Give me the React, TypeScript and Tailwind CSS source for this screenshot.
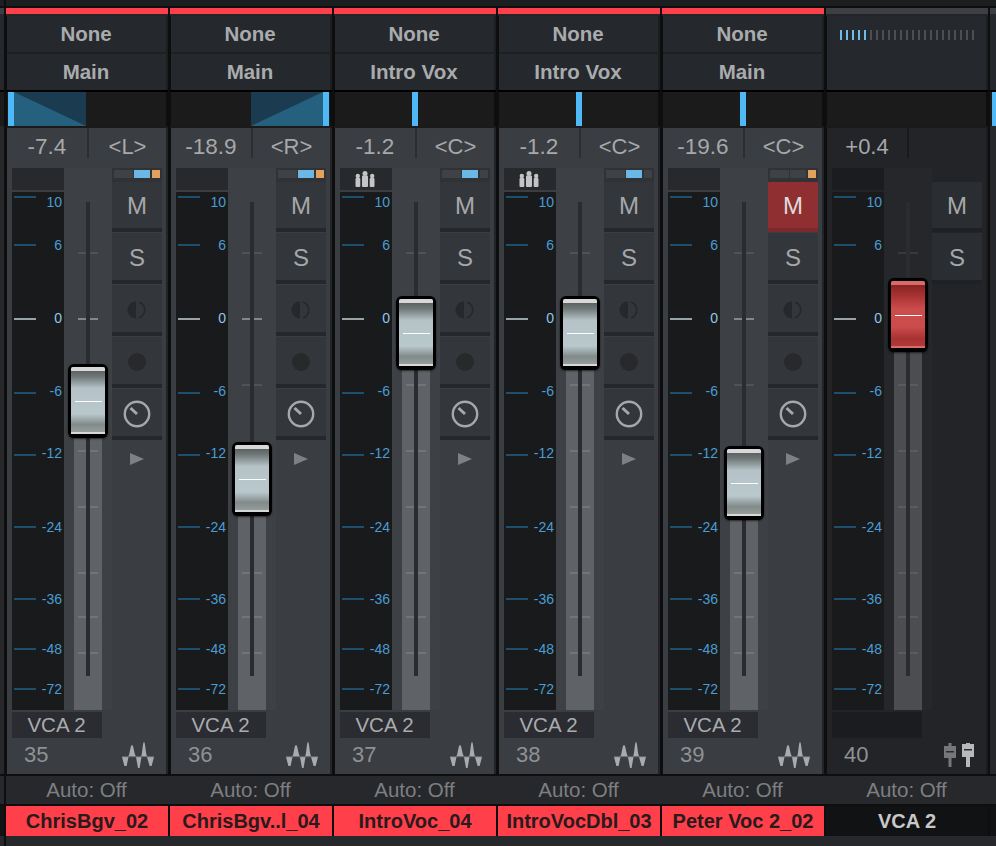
// App.tsx
interface Channel {
    num: number;
    name: string;
    output: string;
    value: string;
    pan: string;
    panMode: 'L' | 'R' | 'C';
    faderY: number;
    leds: [boolean, boolean];
    grouped?: boolean;
    muted?: boolean;
}

const channels: Channel[] = [
    { num: 35, name: 'ChrisBgv_02', output: 'Main', value: '-7.4', pan: '<L>', panMode: 'L', faderY: 364, leds: [true, true] },
    { num: 36, name: 'ChrisBgv..l_04', output: 'Main', value: '-18.9', pan: '<R>', panMode: 'R', faderY: 442, leds: [true, true] },
    { num: 37, name: 'IntroVoc_04', output: 'Intro Vox', value: '-1.2', pan: '<C>', panMode: 'C', faderY: 296, leds: [true, false], grouped: true },
    { num: 38, name: 'IntroVocDbl_03', output: 'Intro Vox', value: '-1.2', pan: '<C>', panMode: 'C', faderY: 296, leds: [true, false], grouped: true },
    { num: 39, name: 'Peter Voc 2_02', output: 'Main', value: '-19.6', pan: '<C>', panMode: 'C', faderY: 446, leds: [false, true], muted: true },
];

const scale = [
    { label: '10', tick: 197, text: 202 },
    { label: '6', tick: 245, text: 245 },
    { label: '0', tick: 319, text: 318 },
    { label: '-6', tick: 393, text: 391 },
    { label: '-12', tick: 455, text: 453 },
    { label: '-24', tick: 527, text: 527 },
    { label: '-36', tick: 599, text: 599 },
    { label: '-48', tick: 649, text: 649 },
    { label: '-72', tick: 689, text: 689 },
];

const faderTicks = [253, 319, 385, 451, 507, 573, 617, 653];
const meterTop = 192;
const faderTop = 168;

function Meter() {
    return (
        <div className="relative h-[518px] bg-[#191a1c]">
            {scale.map((s) => (
                <div key={s.label}>
                    <div
                        className={`absolute left-[2px] h-[2px] w-[22px] ${s.label === '0' ? 'bg-[#9aa3a8]' : 'bg-[#1f4f6e]'}`}
                        style={{ top: s.tick - meterTop - 1 }}
                    />
                    <div
                        className={`absolute right-[2px] text-[14px] leading-[16px] ${s.label === '0' ? 'text-[#8fc6ea]' : 'text-[#4a9dd3]'}`}
                        style={{ top: s.text - meterTop - 8 }}
                    >
                        {s.label}
                    </div>
                </div>
            ))}
        </div>
    );
}

function Fader({ y, red, dark }: { y: number; red?: boolean; dark?: boolean }) {
    const capBottom = y + 74;
    return (
        <div className={`relative h-[542px] w-[48px] ${dark ? 'bg-[#25272b]' : 'bg-[#3d4045]'}`}>
            <div
                className={`absolute bottom-0 left-[10px] w-[28px] ${dark ? 'bg-[#4b4d50]' : 'bg-[#5f6267]'}`}
                style={{ top: capBottom - faderTop - 2 }}
            />
            {faderTicks.map((t) => {
                let tickColor = dark ? 'bg-[#37393c]' : 'bg-[#505357]';
                if (t === 319) tickColor = 'bg-[#85888b]';
                if (t > capBottom) tickColor = dark ? 'bg-[#595b5e]' : 'bg-[#717478]';
                return (
                    <div key={t} className={`absolute left-[14px] h-[2px] w-[20px] ${tickColor}`} style={{ top: t - faderTop - 1 }} />
                );
            })}
            <div className="absolute left-[22px] top-[34px] h-[474px] w-[4px] bg-[#2a2c2f]" />
            <div
                className="absolute left-[4px] h-[74px] w-[40px] rounded-[6px] bg-black p-[3px] pb-[4px] shadow-[0_1px_2px_rgba(0,0,0,0.6)]"
                style={{ top: y - faderTop }}
            >
                <div
                    className={`flex h-full flex-col justify-between rounded-[2px] ${
                        red
                            ? 'bg-[linear-gradient(180deg,#7c1c1c_0%,#a83232_22%,#cc4c4c_42%,#cc4c4c_68%,#a83232_86%,#b23a3a_100%)]'
                            : 'bg-[linear-gradient(180deg,#4f5454_0%,#6f7676_14%,#b5c3c8_32%,#b9c8cd_70%,#828a8a_86%,#9ba1a1_100%)]'
                    }`}
                >
                    <div className={`h-[4px] rounded-t-[2px] ${red ? 'bg-[#d96a6a]' : 'bg-[#d8d8d8]'}`} />
                    <div className="ml-[4px] mr-[3px] h-[1px] bg-white" />
                    <div className={`h-[2px] ${red ? 'bg-[#d96a6a]' : 'bg-[#d8d8d8]'}`} />
                </div>
            </div>
        </div>
    );
}

function SmallButton({ children, dark, active, first }: { children: React.ReactNode; dark?: boolean; active?: boolean; first?: boolean }) {
    let colors = 'bg-[#33363a] border-[#25272a]';
    if (dark) colors = 'bg-[#2a2d31] border-[#1f2124]';
    if (active) colors = 'bg-[#8f2f31] border-[#7c2a2b] text-[#dcdcdc]';
    return (
        <div
            className={`flex w-[50px] items-center justify-center border-b-4 text-[24px] leading-none ${colors} ${
                first ? 'h-[50px] pt-[2px]' : 'mt-px h-[51px] pt-[3px]'
            }`}
        >
            {children}
        </div>
    );
}

function StripButtons({ muted }: { muted?: boolean }) {
    return (
        <div className="flex flex-col text-[#a6a8aa]">
            <SmallButton first active={muted}>M</SmallButton>
            <SmallButton>S</SmallButton>
            <SmallButton>
                <svg width="20" height="20" viewBox="0 0 20 20">
                    <path d="M9 1.5 A8.5 8.5 0 0 0 9 18.5 Z" fill="#26282b" />
                    <path d="M12 2 A8.5 8.5 0 0 1 12 18" fill="none" stroke="#26282b" strokeWidth="1.6" />
                </svg>
            </SmallButton>
            <SmallButton>
                <div className="h-[18px] w-[18px] rounded-full bg-[#28292b]" />
            </SmallButton>
            <SmallButton>
                <svg width="28" height="28" viewBox="0 0 28 28">
                    <circle cx="14" cy="14" r="12.2" fill="none" stroke="#a6a8a9" strokeWidth="2.4" />
                    <path d="M14 14 L7.5 8" stroke="#a6a8a9" strokeWidth="3" />
                </svg>
            </SmallButton>
            <div className="flex h-[38px] items-center justify-center">
                <svg width="14" height="12" viewBox="0 0 14 12">
                    <path d="M0 0 L14 6 L0 12 Z" fill="#7e8184" />
                </svg>
            </div>
        </div>
    );
}

function WaveIcon() {
    return (
        <svg width="32" height="26" viewBox="0 0 32 26">
            <path
                d="M0 15 H6.5 L4.6 24 H2.4 Z M6 14.4 C8 14 8 3 10 3 C12 3 12 14 14.5 14.4 Z M14 15 H19.5 L17.6 26 H16 Z M18.8 14.4 C20.5 14 20.5 0 22 0 C23.5 0 23.5 14 25.6 14.4 Z M25 15 H32 L29.6 24 H27.6 Z"
                fill="#a9abad"
            />
            <rect x="0" y="14.2" width="32" height="1" fill="#6f7174" />
        </svg>
    );
}

function VcaIcon() {
    return (
        <svg width="30" height="24" viewBox="0 0 30 24">
            <path d="M4.5 0 H7.5 V3 H12 V15 H7.5 V24 H4.5 V15 H0 V3 H4.5 Z" fill="#75777a" />
            <rect x="2" y="8" width="8" height="1.5" fill="#2a2c2f" />
            <path d="M22 0 H26 V1 H30 V14 H26 V24 H22 V14 H18 V1 H22 Z" fill="#b6b8ba" />
            <rect x="20" y="6" width="8" height="1.5" fill="#2a2c2f" />
        </svg>
    );
}

function GroupIcon() {
    return (
        <svg width="20" height="16" viewBox="0 0 20 16">
            <g fill="#c2c4c5">
                <circle cx="10" cy="2.5" r="2.5" />
                <rect x="7" y="4.5" width="6" height="11.5" rx="1" />
                <circle cx="2.8" cy="5" r="2.2" />
                <rect x="0.5" y="7" width="4.8" height="9" rx="1" />
                <circle cx="17.2" cy="5" r="2.2" />
                <rect x="14.7" y="7" width="4.8" height="9" rx="1" />
            </g>
        </svg>
    );
}

function PanBar({ mode }: { mode: 'L' | 'R' | 'C' }) {
    return (
        <div
            className={`ml-px flex h-[34px] w-[159px] bg-[#1b1b1c] ${
                mode === 'C' ? 'justify-center' : mode === 'R' ? 'justify-end pr-px' : 'pl-px'
            }`}
        >
            {mode === 'R' && (
                <svg width="72" height="34" viewBox="0 0 72 34">
                    <rect width="72" height="34" fill="#1b3c50" />
                    <path d="M0 34 L72 0 V34 Z" fill="#25607f" />
                </svg>
            )}
            <div className="h-full w-[6px] bg-[#4fb9f8]" />
            {mode === 'L' && (
                <svg width="72" height="34" viewBox="0 0 72 34">
                    <rect width="72" height="34" fill="#1b3c50" />
                    <path d="M0 0 L72 34 H0 Z" fill="#25607f" />
                </svg>
            )}
        </div>
    );
}

function TopSection({ color, children }: { color: string; children: React.ReactNode }) {
    return (
        <>
            <div className="h-[6px] w-full bg-[#1d1e20]" />
            <div className="h-[2px] w-full bg-[#0e0e0f]" />
            <div className={`h-[6px] w-[162px] ${color}`} />
            <div className="h-[2px] w-[162px] bg-[#222427]" />
            <div className="ml-px h-[74px] w-[161px] border-r-2 border-[#1c1e20] bg-[#1e2023]">{children}</div>
            <div className="h-[2px] w-[162px] bg-black" />
        </>
    );
}

function BottomSection({ name, nameColor }: { name: string; nameColor: string }) {
    return (
        <>
            <div className="h-[2px] w-full bg-[#0e0e0f]" />
            <div className="flex h-[28px] w-full items-center justify-center bg-[#26282c] pr-[3px] text-[20.5px] text-[#7d7f82]">
                Auto: Off
            </div>
            <div className="h-[2px] w-full bg-[#0e0e0f]" />
            <div className={`flex h-[30px] w-[162px] items-center justify-center text-[20px] font-bold whitespace-nowrap ${nameColor}`}>
                {name}
            </div>
            <div className="h-[10px] w-full bg-[#26282c]" />
        </>
    );
}

function Strip({ ch }: { ch: Channel }) {
    return (
        <div className="flex w-[164px] shrink-0 flex-col">
            <TopSection color="bg-[#ff3f4a]">
                <div className="flex h-[36px] items-center justify-center bg-[#25282c] pr-px text-[20.5px] font-bold text-[#a9abad]">None</div>
                <div className="h-[2px] bg-[#1d1f22]" />
                <div className="flex h-[36px] items-center justify-center bg-[#25282c] pr-px text-[20.5px] font-bold text-[#a9abad]">
                    {ch.output}
                </div>
            </TopSection>
            <PanBar mode={ch.panMode} />
            <div className="h-[2px] w-[162px] bg-[#1a1a1b]" />
            <div className="ml-px h-[646px] w-[161px] border-r-2 border-[#232427] bg-[#3a3d42]">
                <div className="flex h-[40px] text-[#a6a8aa]">
                    <div className="flex h-[30px] w-[80px] items-center justify-center pt-[7px] text-[22.5px]">{ch.value}</div>
                    <div className="h-[30px] w-[2px] bg-[#2c2e32]" />
                    <div className="flex h-[30px] w-[77px] items-center justify-center pt-[7px] text-[22px]">{ch.pan}</div>
                </div>
                <div className="flex pl-[5px]">
                    <div className="flex w-[52px] flex-col gap-[2px]">
                        <div className="flex h-[22px] items-center justify-center bg-[#27292d] pr-[3px]">{ch.grouped && <GroupIcon />}</div>
                        <Meter />
                    </div>
                    <Fader y={ch.faderY} />
                    <div className="w-[50px]">
                        <div className="flex h-[14px] gap-[1px] bg-[#303236] px-[2px] pt-[2px]">
                            <div className="h-[8px] w-[19px] bg-[#3e4146]" />
                            <div className={`h-[8px] w-[16px] ${ch.leds[0] ? 'bg-[#6cb8e4]' : 'bg-[#3e4146]'}`} />
                            <div className={`ml-px h-[8px] w-[8px] ${ch.leds[1] ? 'bg-[#e0a25c]' : 'bg-[#3e4146]'}`} />
                        </div>
                        <StripButtons muted={ch.muted} />
                    </div>
                </div>
                <div className="ml-[5px] mt-[2px] flex h-[26px] w-[90px] items-center justify-center bg-[#2a2c31] pr-px text-[20.5px] text-[#a9abad]">
                    VCA 2
                </div>
                <div className="flex h-[36px] items-center justify-between pb-[3px] pl-[17px] pr-[12px]">
                    <span className="text-[22px] text-[#8f9193]">{ch.num}</span>
                    <WaveIcon />
                </div>
            </div>
            <BottomSection name={ch.name} nameColor="bg-[#ff3f4a] text-[#2a1a1c]" />
        </div>
    );
}

function VcaStrip() {
    const ticks = Array.from({ length: 23 }, (_, i) => i);
    return (
        <div className="flex w-[164px] shrink-0 flex-col">
            <TopSection color="bg-[#3c3f44]">
                <div className="flex h-full items-start gap-[4px] bg-[#25282c] pl-[13px] pt-[14px]">
                    {ticks.map((i) => (
                        <div key={i} className={`h-[10px] w-[2px] ${i < 5 ? 'bg-[#6fbde6]' : 'bg-[#4c4e51]'}`} />
                    ))}
                </div>
            </TopSection>
            <div className="ml-px h-[34px] w-[159px] bg-[#1b1b1c]" />
            <div className="h-[2px] w-[162px] bg-[#1a1a1b]" />
            <div className="ml-px h-[646px] w-[161px] border-r-2 border-[#1a1b1d] bg-[#222428]">
                <div className="flex h-[40px] text-[22px] text-[#a6a8aa]">
                    <div className="flex h-[30px] w-[80px] items-center justify-center pt-[7px]">+0.4</div>
                    <div className="h-[30px] w-[2px] bg-[#191a1c]" />
                </div>
                <div className="flex pl-[5px]">
                    <div className="flex w-[52px] flex-col gap-[2px]">
                        <div className="h-[22px] bg-[#1b1c1f]" />
                        <Meter />
                    </div>
                    <Fader y={278} red dark />
                    <div className="w-[50px] pt-[14px] text-[#a6a8aa]">
                        <SmallButton first dark>M</SmallButton>
                        <SmallButton dark>S</SmallButton>
                    </div>
                </div>
                <div className="ml-[5px] mt-[2px] h-[26px] w-[90px] bg-[#1b1c1f]" />
                <div className="flex h-[36px] items-center justify-between pb-[3px] pl-[17px] pr-[12px]">
                    <span className="text-[22px] text-[#8f9193]">40</span>
                    <VcaIcon />
                </div>
            </div>
            <BottomSection name="VCA 2" nameColor="bg-[#101214] text-[#c8c8c8]" />
        </div>
    );
}

function EdgeStrip({ className, showPan }: { className: string; showPan?: boolean }) {
    return (
        <div className={`flex shrink-0 flex-col ${className}`}>
            <div className="h-[6px] bg-[#1d1e20]" />
            <div className="h-[2px] bg-[#0e0e0f]" />
            <div className="h-[6px] bg-[#3c3f44]" />
            <div className="h-[76px] bg-[#25282c]" />
            <div className="h-[2px] bg-black" />
            <div className={`h-[34px] bg-[#1b1b1c] ${showPan ? 'pl-[2px]' : ''}`}>
                {showPan && <div className="h-full bg-[#4fb9f8]" />}
            </div>
            <div className="h-[648px] bg-[#26282c]" />
            <div className="h-[2px] bg-[#0e0e0f]" />
            <div className="h-[28px] bg-[#26282c]" />
            <div className="h-[2px] bg-[#0e0e0f]" />
            <div className="h-[30px] bg-[#101214]" />
            <div className="h-[10px] bg-[#26282c]" />
        </div>
    );
}

export default function App() {
    return (
        <div className="flex h-[846px] w-[996px] overflow-hidden bg-[#0e0e0f] font-['Liberation_Sans',Arial,sans-serif]">
            <EdgeStrip className="w-[6px] border-r-2 border-[#0e0e0f]" />
            {channels.map((ch) => (
                <Strip key={ch.num} ch={ch} />
            ))}
            <VcaStrip />
            <EdgeStrip className="w-[6px]" showPan />
        </div>
    );
}
